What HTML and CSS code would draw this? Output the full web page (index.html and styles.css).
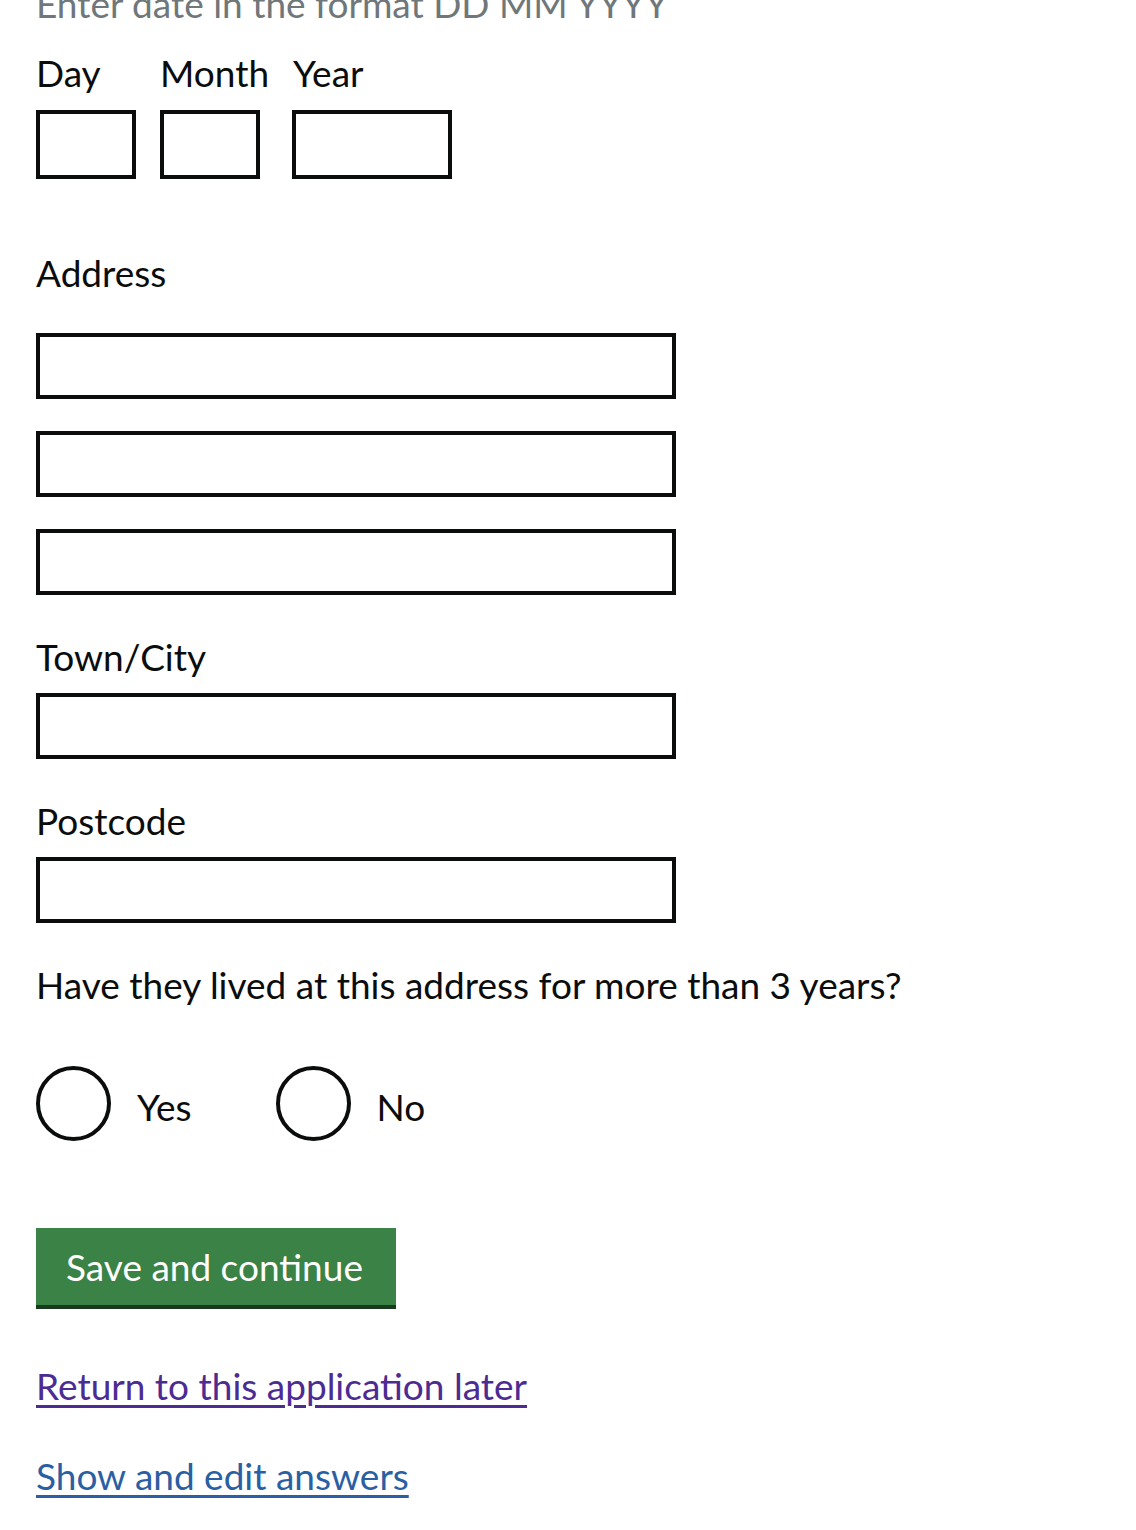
FILE: index.html
```html
<!DOCTYPE html>
<html lang="en">
<head>
<meta charset="utf-8">
<title>Your address</title>
<link rel="stylesheet" href="styles.css">
</head>
<body>
<main class="page">
  <div class="form-group date-group">
    <p class="hint">Enter date in the format DD MM YYYY</p>
    <div class="date-row">
      <div class="date-item">
        <label class="label date-label" for="dob-day">Day</label>
        <input class="input input-day" id="dob-day" type="text">
      </div>
      <div class="date-item">
        <label class="label date-label" for="dob-month">Month</label>
        <input class="input input-month" id="dob-month" type="text">
      </div>
      <div class="date-item">
        <label class="label date-label" for="dob-year">Year</label>
        <input class="input input-year" id="dob-year" type="text">
      </div>
    </div>
  </div>

  <div class="form-group address-group">
    <label class="label address-label" for="address-1">Address</label>
    <div class="address-lines">
      <input class="input input-full" id="address-1" type="text">
      <input class="input input-full" id="address-2" type="text">
      <input class="input input-full" id="address-3" type="text">
    </div>
  </div>

  <div class="form-group field-group">
    <label class="label" for="town">Town/City</label>
    <input class="input input-full" id="town" type="text">
  </div>

  <div class="form-group field-group">
    <label class="label" for="postcode">Postcode</label>
    <input class="input input-full" id="postcode" type="text">
  </div>

  <fieldset class="form-group radio-group">
    <legend class="legend">Have they lived at this address for more than 3 years?</legend>
    <div class="radio-row">
      <label class="radio">
        <span class="radio-circle"></span>
        <span class="radio-text">Yes</span>
      </label>
      <label class="radio">
        <span class="radio-circle"></span>
        <span class="radio-text">No</span>
      </label>
    </div>
  </fieldset>

  <button class="button" type="submit">Save and continue</button>

  <p class="link-row link-row-first"><a class="link link-visited" href="#">Return to this application later</a></p>
  <p class="link-row"><a class="link" href="#">Show and edit answers</a></p>
</main>
</body>
</html>
```
FILE: styles.css
```css
html, body {
  margin: 0;
  padding: 0;
  background: #ffffff;
}

body {
  color: #0b0c0c;
  font-family: Lato, "Liberation Sans", sans-serif;
  font-size: 37px;
  line-height: 50px;
}

.page {
  padding: 0 36px;
}

.form-group {
  margin: 0;
  padding: 0;
  border: 0;
}

.hint {
  margin: -21px 0 0;
  color: #6f777b;
}

.label {
  display: block;
  margin: 0 0 10px;
}

.date-row {
  display: flex;
  gap: 24px;
  margin-top: 19px;
}

.date-item {
  display: flex;
  flex-direction: column;
  align-items: flex-start;
}

.date-label {
  margin-bottom: 12px;
}

.input {
  display: block;
  box-sizing: border-box;
  margin: 0;
  padding: 0 8px;
  border: 4px solid #0b0c0c;
  border-radius: 0;
  background: #ffffff;
  font: inherit;
  height: 66px;
}

.input-day,
.input-month {
  width: 100px;
  height: 69px;
}

.input-year {
  width: 160px;
  height: 69px;
  margin-left: -1px;
}

.input-full {
  width: 640px;
}

.address-group {
  margin-top: 69px;
}

.address-label {
  margin-bottom: 35px;
}

.address-lines {
  display: flex;
  flex-direction: column;
  gap: 32px;
}

.field-group {
  margin-top: 37px;
}

.field-group .label {
  margin-bottom: 11px;
}

.radio-group {
  margin-top: 37px;
  min-width: 0;
}

.legend {
  padding: 0;
  margin: 0;
}

.radio-row {
  display: flex;
  gap: 84px;
  margin-top: 56px;
}

.radio {
  display: flex;
  align-items: center;
  gap: 26px;
}

.radio-circle {
  box-sizing: border-box;
  width: 75px;
  height: 75px;
  border: 4px solid #0b0c0c;
  border-radius: 50%;
  background: #ffffff;
}

.radio-text {
  padding-top: 7px;
}

.button {
  display: block;
  margin: 87px 0 0;
  padding: 14px 33px 13px 30px;
  border: 0;
  border-radius: 0;
  background: #3a8245;
  box-shadow: 0 4px 0 #1a3a1f;
  color: #ffffff;
  font: inherit;
  cursor: pointer;
}

.link-row {
  margin: 40px 0 0;
}

.link-row-first {
  margin-top: 56px;
}

.link {
  color: #2b5fa3;
  text-decoration: underline;
  text-decoration-thickness: 3px;
  text-underline-offset: 5px;
}

.link-visited {
  color: #4c2c92;
}
```
